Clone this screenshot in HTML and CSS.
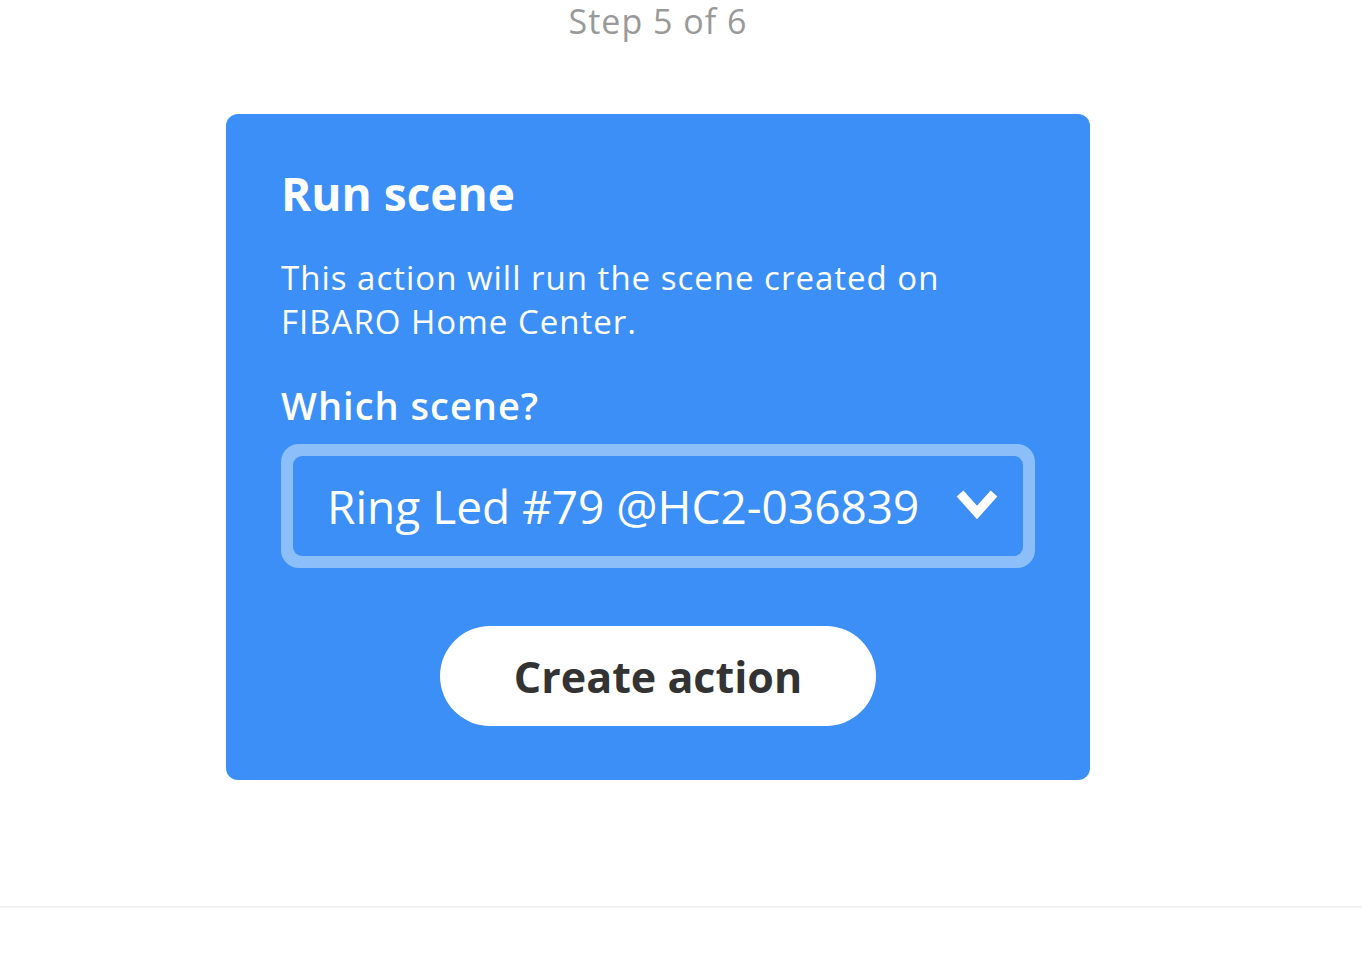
FILE: index.html
```html
<!DOCTYPE html>
<html lang="en">
<head>
    <meta charset="UTF-8">
    <title>Run scene</title>
    <link rel="stylesheet" href="styles.css">
</head>
<body>
    <div class="page">
        <div class="step">Step 5 of 6</div>

        <div class="card">
            <h1 class="title">Run scene</h1>
            <p class="desc">This action will run the scene created on FIBARO Home Center.</p>

            <label class="field-label" for="scene">Which scene?</label>
            <div class="select-wrap">
                <div class="select" id="scene">
                    <span class="select-value">Ring Led #79 @HC2-036839</span>
                    <svg class="chevron" width="42" height="32" viewBox="0 0 42 32">
                        <polyline points="4,4.5 21,23.5 38,4.5" fill="none" stroke="#fff" stroke-width="9"/>
                    </svg>
                </div>
            </div>

            <div class="actions">
                <button class="btn" type="button">Create action</button>
            </div>
        </div>
    </div>
    <div class="footer-line"></div>
</body>
</html>
```

FILE: styles.css
```css
body {
    margin: 0;
    font-family: "Open Sans", Lato, sans-serif;
    background: #fff;
}
.page {
    width: 1316px;
    height: 906px;
}
.step {
    text-align: center;
    color: #999;
    font-size: 34px;
    letter-spacing: 1px;
    line-height: 40px;
    padding-top: 1px;
}
.card {
    width: 864px;
    margin: 73px auto 0;
    box-sizing: border-box;
    padding: 50px 55px 54px;
    background: #3b8ff7;
    border-radius: 12px;
    color: #fff;
}
.title {
    margin: 0;
    font-size: 46px;
    font-weight: 700;
    line-height: 58px;
}
.desc {
    margin: 34px 0 0;
    font-size: 33px;
    letter-spacing: 1px;
    line-height: 44px;
}
.field-label {
    display: block;
    margin-top: 38px;
    font-size: 38px;
    font-weight: 600;
    letter-spacing: 1px;
    line-height: 46px;
}
.select-wrap {
    margin-top: 16px;
    padding: 12px;
    background: #8cbefa;
    border-radius: 18px;
}
.select {
    display: flex;
    align-items: center;
    justify-content: space-between;
    height: 100px;
    padding: 0 25px 0 34px;
    background: #3b8ff7;
    border-radius: 9px;
}
.select-value {
    font-size: 46px;
    font-weight: 500;
}
.chevron {
    display: block;
    margin-top: -3px;
}
.actions {
    display: flex;
    justify-content: center;
    margin-top: 58px;
}
.btn {
    width: 436px;
    height: 100px;
    border: none;
    border-radius: 50px;
    background: #fff;
    color: #333;
    font-family: inherit;
    font-size: 43px;
    font-weight: 700;
    cursor: pointer;
}
.footer-line {
    height: 2px;
    background: #f1f1f1;
}
```
